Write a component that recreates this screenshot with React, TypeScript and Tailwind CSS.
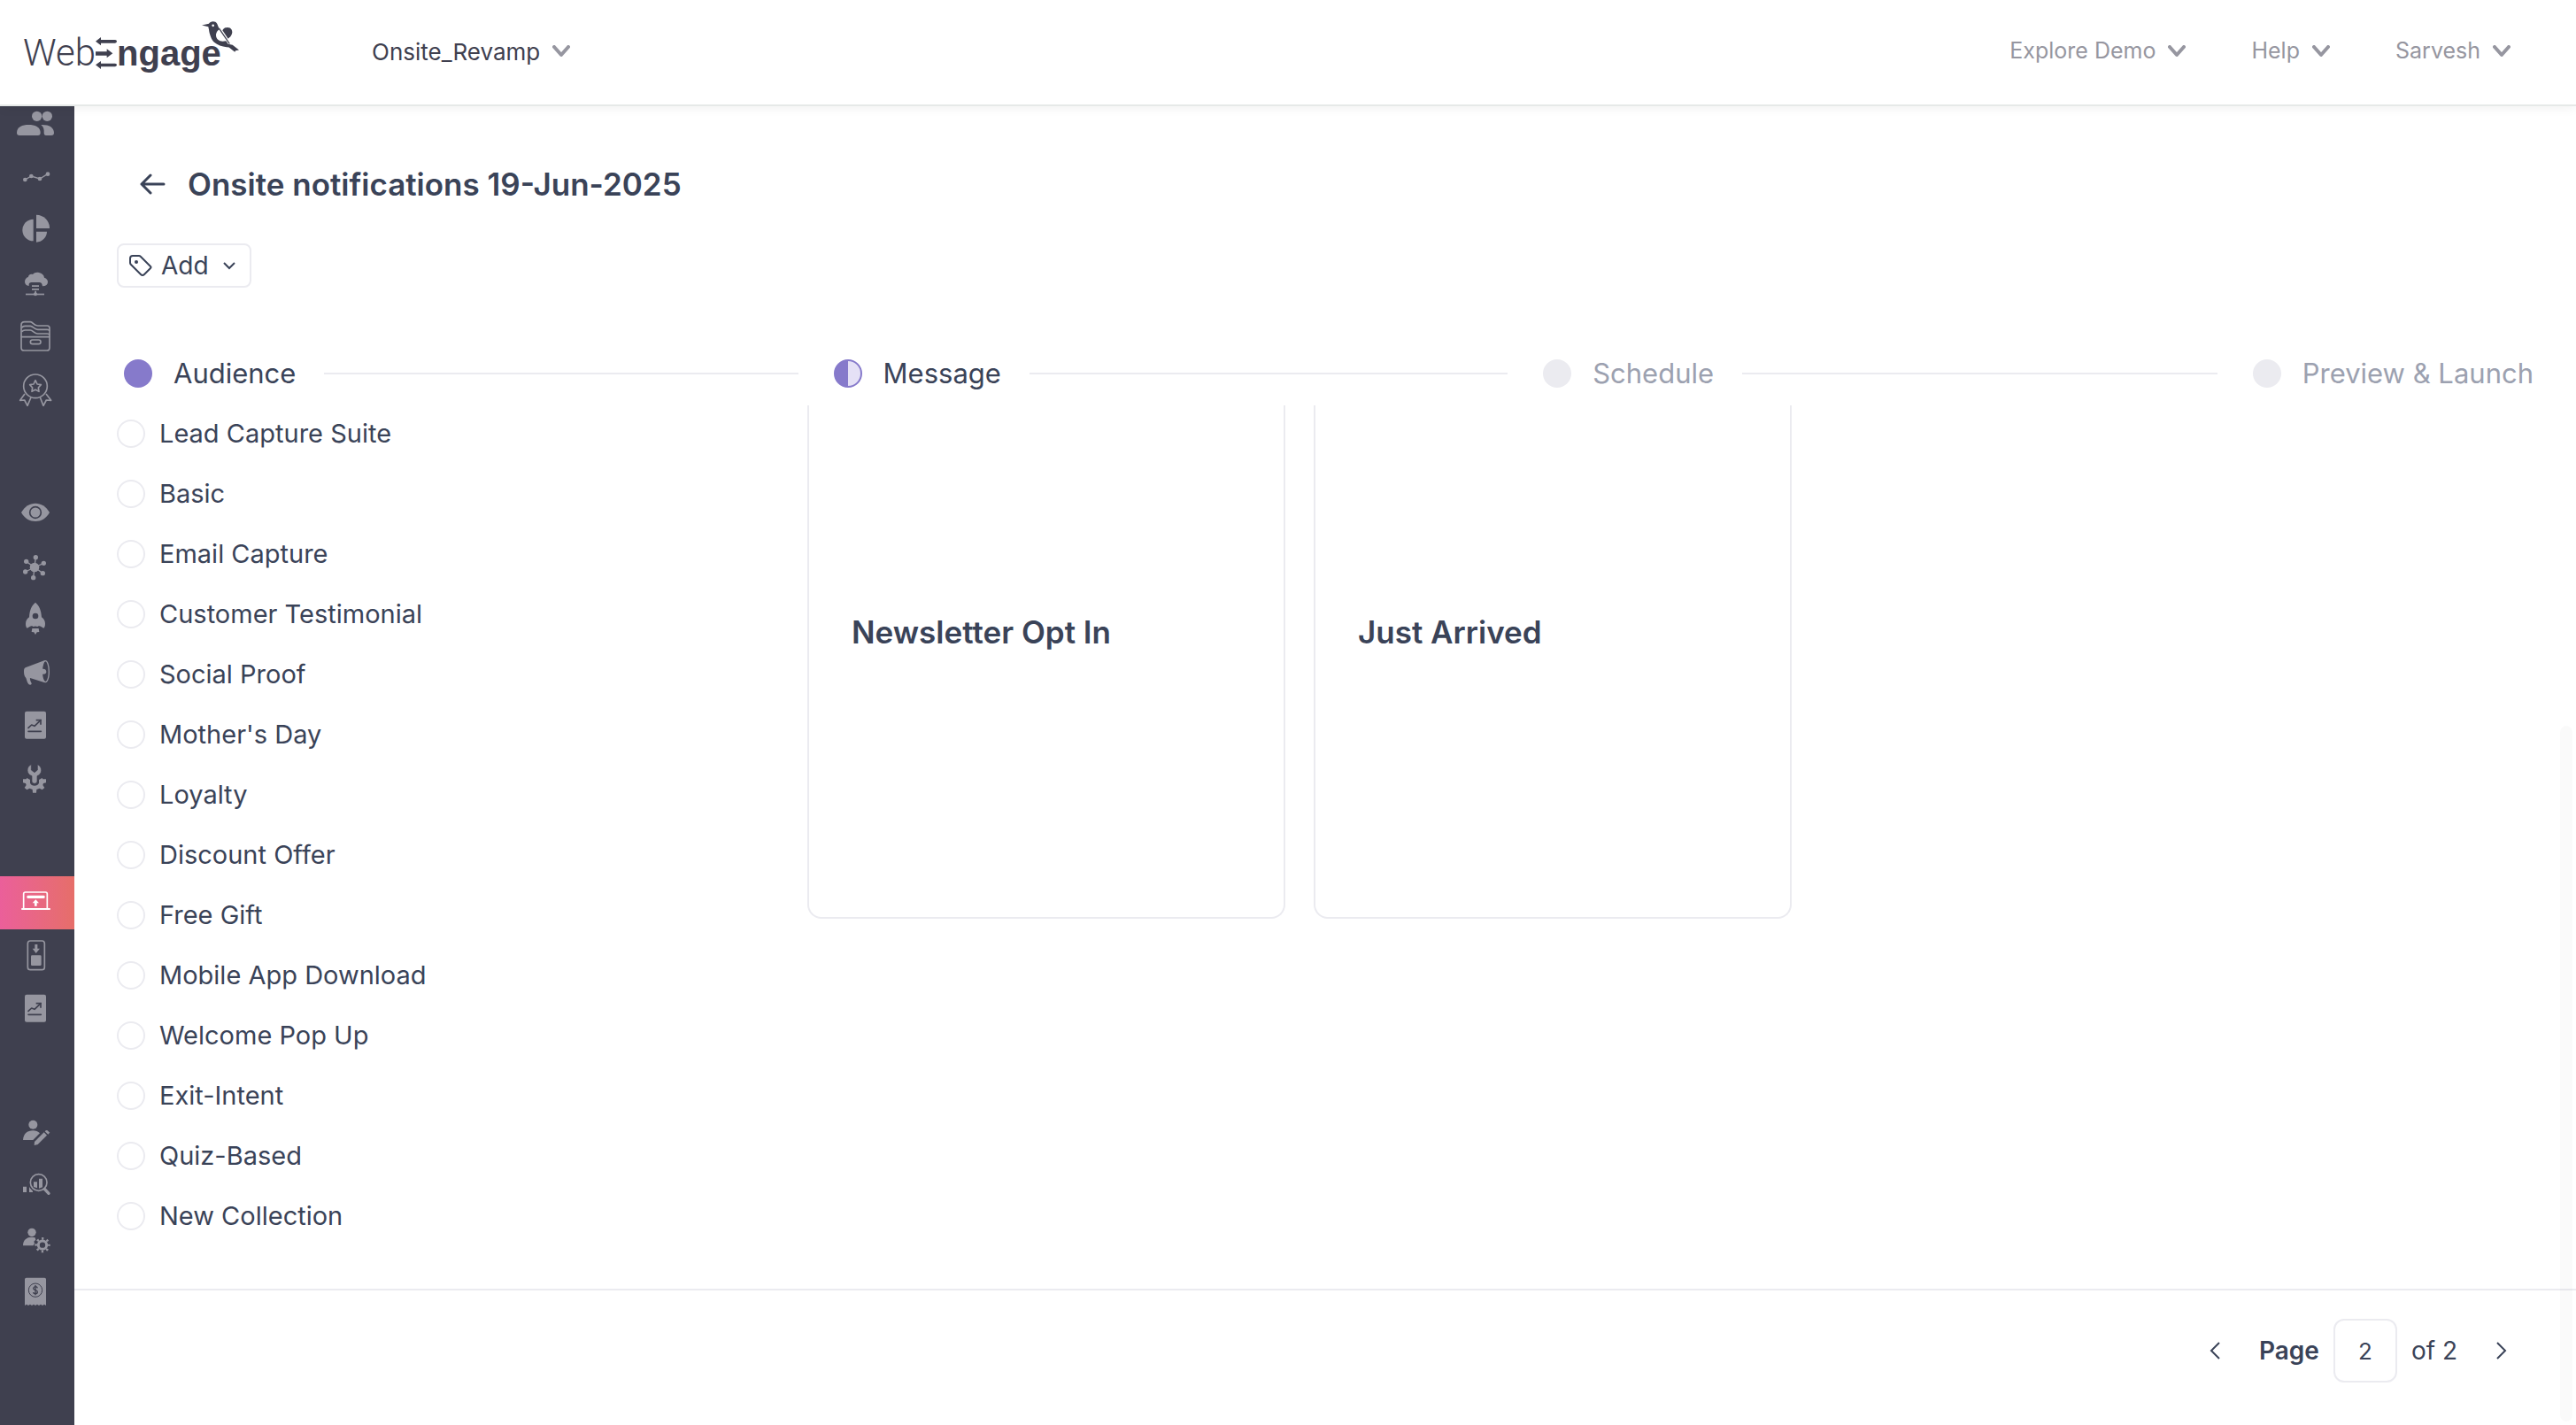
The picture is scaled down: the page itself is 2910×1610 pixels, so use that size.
import type { ReactNode } from "react";

const templates = [
  "Lead Capture Suite",
  "Basic",
  "Email Capture",
  "Customer Testimonial",
  "Social Proof",
  "Mother's Day",
  "Loyalty",
  "Discount Offer",
  "Free Gift",
  "Mobile App Download",
  "Welcome Pop Up",
  "Exit-Intent",
  "Quiz-Based",
  "New Collection",
];

const cards = ["Newsletter Opt In", "Just Arrived"];

const DARK = "#3f404f";

const report = (
  <>
    <rect x="84" y="41" width="72" height="93" rx="6" />
    <g fill="none" stroke={DARK} strokeWidth="5" strokeLinecap="round" strokeLinejoin="round">
      <path d="M96 97L107 87L117 91L138 71" />
      <path d="M122 71H138V86" strokeLinecap="butt" strokeLinejoin="miter" />
      <path d="M96 109H139" />
    </g>
  </>
);

const groups: { label: string; icon: ReactNode; active?: boolean }[][] = [
  [
    {
      label: "Users",
      icon: (
        <>
          <circle cx="125" cy="64" r="17" />
          <circle cx="160" cy="64" r="17" />
          <path d="M57 120C57 100 76 93 97 93S137 100 137 120Q137 129 128 129H66Q57 129 57 120Z" />
          <path d="M139 93C166 92 183 102 183 120Q183 129 174 129H156Q149 129 149 120C150 108 147 99 139 93Z" />
        </>
      ),
    },
    {
      label: "Trends",
      icon: (
        <>
          <path d="M85 99L106 87L135 96L161 80" fill="none" stroke="currentColor" strokeWidth="4" />
          <circle cx="85" cy="99" r="7" />
          <circle cx="106" cy="87" r="7" />
          <circle cx="135" cy="96" r="7" />
          <circle cx="162" cy="80" r="7" />
        </>
      ),
    },
    {
      label: "Segments",
      icon: (
        <>
          <path d="M113 53A37 37 0 0 0 113 127Z" />
          <path d="M123 38A45 45 0 0 1 168 84H123Z" />
          <path d="M123 95H159A37 37 0 0 1 123 131Z" />
        </>
      ),
    },
    {
      label: "Data platform",
      icon: (
        <>
          <path d="M98 99C89 98 84 93 84 85C84 76 90 70 96 69C96 62 103 57 111 60C116 54 124 52 132 54C142 56 149 62 150 71C158 73 162 79 162 86C162 94 156 99 144 100L142 92Q140 87 134 87H106Q100 87 98 92Z" />
          <path d="M108 97H132V102H108ZM108 108H132V113H108ZM118 116H123V125H118Z" />
          <path d="M87 125H150V130H87Z" />
          <circle cx="120" cy="127" r="6" />
        </>
      ),
    },
    {
      label: "Catalogs",
      icon: (
        <g fill="none" stroke="currentColor" strokeWidth="5" strokeLinejoin="round">
          <path d="M72 92V52Q72 41 83 41H103C112 41 113 54 128 54H160Q168 54 168 62V92" />
          <path d="M74 61Q77 55 85 55H103C112 55 116 67 128 67H160Q166 67 168 71" />
          <path d="M74 75Q77 69 85 69H103C112 69 116 81 128 81H160Q166 81 168 85" />
          <path d="M72 92H168V128Q168 138 158 138H82Q72 138 72 128Z" />
          <rect x="103" y="102" width="35" height="14" rx="7" />
        </g>
      ),
    },
    {
      label: "Rewards",
      icon: (
        <g fill="none" stroke="currentColor" strokeWidth="5" strokeLinejoin="round">
          <circle cx="120" cy="79" r="40" />
          <path d="M120 59L126 72L139 74L130 84L132 97L120 91L108 97L110 84L101 74L114 72Z" />
          <path d="M84 105L68 127L83 126L93 145L105 117" />
          <path d="M156 105L173 127L157 126L147 145L136 117" />
        </g>
      ),
    },
  ],
  [
    {
      label: "Live view",
      icon: (
        <>
          <path d="M72 87C84 66 101 56 120 56S156 66 168 87C156 108 139 117 120 117S84 108 72 87Z" />
          <circle cx="120" cy="87" r="19" fill="none" stroke={DARK} strokeWidth="5" />
        </>
      ),
    },
    {
      label: "Relays",
      icon: (
        <>
          <path d="M117 93L121 59M117 93L148 79M117 93L145 113M117 93L113 128M117 93L86 108M117 93L89 73" stroke="currentColor" strokeWidth="4" />
          <circle cx="117" cy="93" r="16" />
          <circle cx="121" cy="59" r="8" />
          <circle cx="148" cy="79" r="8" />
          <circle cx="145" cy="113" r="8" />
          <circle cx="113" cy="128" r="8" />
          <circle cx="86" cy="108" r="8" />
          <circle cx="89" cy="73" r="8" />
        </>
      ),
    },
    {
      label: "Journeys",
      icon: (
        <>
          <path d="M120 32C133 43 140 59 141 82C149 87 153 95 153 104C153 112 151 117 148 119L138 113Q135 111 131 112L127 114Q120 111 113 114L109 112Q105 111 102 113L92 119C89 117 87 112 87 104C87 95 91 87 99 82C100 59 107 43 120 32Z" />
          <circle cx="120" cy="78" r="10" fill={DARK} />
          <path d="M109 120H131L133 132L125 133L120 141L115 133L107 132Z" />
        </>
      ),
    },
    {
      label: "Campaigns",
      icon: (
        <>
          <path d="M86 73L152 48V124L102 108C101 112 103 119 107 126C108 132 101 133 97 129C91 123 91 114 88 108C83 103 81 96 81 87C81 79 82 75 86 73Z" />
          <ellipse cx="154" cy="86" rx="12" ry="36" fill={DARK} stroke="currentColor" strokeWidth="4" />
          <path d="M144 77C154 76 157 82 157 87S153 96 144 95Z" />
        </>
      ),
    },
    { label: "Reports", icon: report },
    {
      label: "Configuration",
      icon: (
        <>
          <path d="M78 91L89 91L91 87L102 93V104Q106 113 117 113T132 104V93L143 87L145 91L156 91V103L147 105L145 111L151 120L143 127L134 122L124 126L123 137H111L110 126L100 122L91 127L83 120L89 111L87 105L78 103Z" />
          <path
            d="M106 41V60L117 68L127 60V41C136 45 140 53 140 61C140 71 134 77 126 80V99Q125 106 117 106T108 99V80C99 77 93 71 93 61C93 53 97 45 106 41Z"
            stroke={DARK}
            strokeWidth="2"
          />
        </>
      ),
    },
  ],
  [
    {
      label: "Onsite notifications",
      active: true,
      icon: (
        <>
          <path d="M80 109V60Q80 54 86 54H154Q160 54 160 60V109" fill="none" stroke="currentColor" strokeWidth="5" />
          <rect x="91" y="65" width="61" height="10" rx="4" />
          <path d="M121 79L132 91H125V101H117V91H110Z" />
          <rect x="72" y="108" width="99" height="6" rx="3" />
        </>
      ),
    },
    {
      label: "In-app notifications",
      icon: (
        <>
          <rect x="94" y="39" width="57" height="98" rx="9" fill="none" stroke="currentColor" strokeWidth="5" />
          <path d="M118 51H127V65H135L122 81L110 65H118Z" />
          <rect x="105" y="88" width="35" height="35" rx="4" />
        </>
      ),
    },
    { label: "Onsite reports", icon: report },
  ],
  [
    {
      label: "Edit personas",
      icon: (
        <>
          <circle cx="112" cy="62" r="15" />
          <path d="M78 114C79 94 92 82 112 82C121 82 129 86 135 91L112 114Z" />
          <path d="M117 120L149 88L159 98L128 129L116 132Z" />
          <path d="M152 85Q157 79 161 82L167 88Q169 91 163 95Z" />
        </>
      ),
    },
    {
      label: "Analytics",
      icon: (
        <>
          <path d="M78 92H90V111H78ZM99 93Q103 100 111 107V111H99Z" />
          <circle cx="131" cy="78" r="28" fill="none" stroke="currentColor" strokeWidth="5" />
          <path d="M114 76H126V97L114 93ZM132 65H144V94L132 98Z" />
          <path d="M151 100L165 115" stroke="currentColor" strokeWidth="10" strokeLinecap="round" />
        </>
      ),
    },
    {
      label: "Team settings",
      icon: (
        <>
          <circle cx="108" cy="67" r="14" />
          <path d="M78 112C78 93 90 83 108 83Q114 83 119 85L121 92L115 98L117 104L113 112Z" />
          <circle cx="144" cy="110" r="14" fill="none" stroke="currentColor" strokeWidth="9" />
          <circle cx="144" cy="110" r="22" fill="none" stroke="currentColor" strokeWidth="8" strokeDasharray="7 10.28" strokeDashoffset="3.5" />
        </>
      ),
    },
    {
      label: "Billing",
      icon: (
        <>
          <path d="M84 46Q84 41 89 41H151Q156 41 156 46V135L150 131L144 135L138 131L132 135L126 131L120 135L114 131L108 135L102 131L96 135L90 131L84 135Z" />
          <circle cx="120" cy="83" r="23" fill="none" stroke={DARK} strokeWidth="3" />
          <path d="M127 76Q126 71 120 71T113 77Q113 81 120 83T127 89Q127 95 120 95T113 90M120 66V100" fill="none" stroke={DARK} strokeWidth="4" />
        </>
      ),
    },
  ],
];

function Sidebar() {
  return (
    <aside className="w-[84px] shrink-0 overflow-hidden bg-[#3f404f]">
      <nav aria-label="Main" className="-mt-2.5 flex flex-col gap-20">
        {groups.map((group, i) => (
          <div key={i} className="flex flex-col">
            {group.map((item) => (
              <a
                key={item.label}
                href="#"
                aria-label={item.label}
                className={
                  item.active
                    ? "block h-[60px] bg-linear-to-r from-[#eb5f9a] to-[#e66e69] text-white"
                    : "block h-[60px] text-[#9696a0]"
                }
              >
                <svg viewBox="0 0 252 180" className="h-[60px] w-[84px]" fill="currentColor" aria-hidden="true">
                  {item.icon}
                </svg>
              </a>
            ))}
          </div>
        ))}
      </nav>
    </aside>
  );
}

function Chevron() {
  return (
    <svg viewBox="0 0 20 14" className="h-3.5 w-5" fill="none" stroke="#9696a0" strokeWidth="4" aria-hidden="true">
      <path d="M2 2L10 11L18 2" strokeLinecap="round" strokeLinejoin="round" />
    </svg>
  );
}

function Logo() {
  return (
    <a href="#" aria-label="WebEngage" className="relative flex w-[244px] items-center pl-[26px] leading-[48px] text-[#3f404f]">
      <span className="font-[Roboto,sans-serif] text-[42px] font-light">Web</span>
      <svg viewBox="0 0 72 108" className="h-9 w-6 shrink-0" fill="currentColor" aria-hidden="true">
        <path d="M0 14L18 0V9H66Q72 9 72 14T66 20H18V28Z" />
        <path d="M0 49H38V40L58 55L38 70V62H0Z" />
        <path d="M0 94L18 81V89H66Q72 89 72 94T66 100H18V108Z" />
      </svg>
      <span className="font-['Liberation_Sans',sans-serif] text-[40px] font-bold">ngage</span>
      <svg viewBox="0 0 126 104" className="absolute -top-3 left-[228px] h-[35px] w-[42px]" fill="currentColor" aria-hidden="true">
        <path d="M0 13L24 8C27 1 38 -2 46 2C54 7 54 17 60 27C56 28 48 36 48 47C48 60 58 67 71 68L82 66L89 77L104 80L126 97L114 99L112 104L92 88C74 87 54 82 42 71C32 61 26 43 24 28L22 18Z" />
        <circle cx="38" cy="14" r="4" fill="white" />
        <path d="M70 30C74 21 86 18 95 22C105 28 105 42 97 51L89 59Z" />
        <path d="M58 23L94 76" stroke="currentColor" strokeWidth="4" />
      </svg>
    </a>
  );
}

function Header() {
  return (
    <header className="relative z-10 flex h-[120px] items-start border-b-2 border-[#e6e9e8] bg-white pr-[74px] shadow-[0_2px_12px_rgba(0,0,0,0.06)]">
      <div className="mt-9 h-12">
        <Logo />
      </div>
      <div className="ml-[176px] flex h-[116px] flex-1 items-center justify-between">
        <button type="button" className="flex items-center gap-3.5 text-[26px] text-[#3f404f]">
          Onsite_Revamp
          <Chevron />
        </button>
        <nav aria-label="Account" className="flex gap-[74px] text-[25px] text-[#9696a0]">
          {["Explore Demo", "Help", "Sarvesh"].map((name) => (
            <button key={name} type="button" className="flex items-center gap-3.5">
              {name}
              <Chevron />
            </button>
          ))}
        </nav>
      </div>
    </header>
  );
}

const steps = [
  { name: "Audience", dot: "bg-[#867acb]", text: "text-[#3a4358]" },
  { name: "Message", dot: "border-2 border-[#867acb] bg-linear-to-r from-[#867acb] from-50% to-[#e5e1f6] to-50%", text: "text-[#3a4358]" },
  { name: "Schedule", dot: "bg-[#ebebf0]", text: "text-[#9ca1b0]" },
  { name: "Preview & Launch", dot: "bg-[#ebebf0]", text: "text-[#9ca1b0]" },
];

function Stepper() {
  return (
    <ol className="mt-[73px] flex h-12 items-center pr-12 pl-14 text-[31px]">
      {steps.map((step, i) => {
        const last = i === steps.length - 1;
        return (
          <li key={step.name} className={last ? "flex items-center" : "flex flex-1 items-center"}>
            <span className={`size-8 shrink-0 rounded-full ${step.dot}`} />
            <span className={`ml-6 whitespace-nowrap ${step.text}`}>{step.name}</span>
            {!last && <span className="mr-10 ml-8 h-0.5 flex-1 bg-[#ebebf0]" />}
          </li>
        );
      })}
    </ol>
  );
}

function Pagination() {
  return (
    <footer className="flex flex-1 items-start justify-end border-t-2 border-[#ebebf0] pt-8 pr-[78px]">
      <div className="flex h-[72px] items-center text-[28px]">
        <button type="button" aria-label="Previous page" className="mr-11">
          <svg viewBox="0 0 12 20" className="h-5 w-3" fill="none" stroke="currentColor" strokeWidth="2" aria-hidden="true">
            <path d="M11 1L2 10L11 19" />
          </svg>
        </button>
        <label htmlFor="page" className="font-semibold">
          Page
        </label>
        <input
          id="page"
          type="text"
          defaultValue="2"
          className="mx-4 size-[72px] rounded-xl border-2 border-[#ebebf0] text-center text-[26px]"
        />
        <span>of 2</span>
        <button type="button" aria-label="Next page" className="ml-11">
          <svg viewBox="0 0 12 20" className="h-5 w-3" fill="none" stroke="currentColor" strokeWidth="2" aria-hidden="true">
            <path d="M1 1L10 10L1 19" />
          </svg>
        </button>
      </div>
    </footer>
  );
}

export default function App() {
  return (
    <div className="flex min-h-screen flex-col bg-white font-[Inter,sans-serif] text-[#3a4358]">
      <Header />
      <div className="flex flex-1">
        <Sidebar />
        <main className="relative flex min-w-0 flex-1 flex-col pt-16">
          <div className="flex h-12 items-center pl-[72px]">
            <button type="button" aria-label="Back" className="mr-6">
              <svg viewBox="0 0 32 24" className="h-6 w-8" fill="none" stroke="currentColor" strokeWidth="3" aria-hidden="true">
                <path d="M29 12H4M14 2L4 12L14 22" strokeLinecap="round" strokeLinejoin="round" />
              </svg>
            </button>
            <h1 className="text-[35px] font-semibold">Onsite notifications 19-Jun-2025</h1>
          </div>
          <button
            type="button"
            className="mt-[43px] ml-12 flex h-[50px] w-[152px] items-center rounded-lg border-2 border-[#ebebf0] pl-3 text-[28px]"
          >
            <svg viewBox="0 0 26 32" className="h-8 w-[26px]" fill="none" stroke="currentColor" strokeWidth="2" strokeLinejoin="round" aria-hidden="true">
              <path d="M4 5H11Q12 5 13 6L24 17Q25 18 24 19L17 26Q15 28 13 26L2 15Q1 14 1 13V8Q1 5 4 5Z" />
              <circle cx="8" cy="12" r="2" fill="currentColor" stroke="none" />
            </svg>
            <span className="ml-2.5">Add</span>
            <svg viewBox="0 0 14 10" className="ml-4 h-2.5 w-3.5" fill="none" stroke="currentColor" strokeWidth="2" aria-hidden="true">
              <path d="M1 2L7 8L13 2" />
            </svg>
          </button>
          <Stepper />
          <div className="mt-2.5 flex pl-12">
            <ul className="w-[780px] shrink-0 pb-12">
              {templates.map((name, i) => (
                <li key={name} className="flex h-[68px] items-center">
                  <input
                    id={`template-${i}`}
                    type="radio"
                    name="template"
                    className="size-8 shrink-0 appearance-none rounded-full border-2 border-[#ebebf0]"
                  />
                  <label htmlFor={`template-${i}`} className="pl-4 text-[29px]">
                    {name}
                  </label>
                </li>
              ))}
            </ul>
            <div className="mt-0.5 flex items-start gap-8">
              {cards.map((name) => (
                <article key={name} className="h-[580px] w-[540px] rounded-b-2xl border-2 border-t-0 border-[#ebebf0] px-12 pt-[236px]">
                  <h2 className="text-[35px] leading-10 font-semibold">{name}</h2>
                </article>
              ))}
            </div>
          </div>
          <Pagination />
          <div className="absolute right-1 bottom-1 h-[786px] w-3.5 rounded-full bg-black/2" />
        </main>
      </div>
    </div>
  );
}
